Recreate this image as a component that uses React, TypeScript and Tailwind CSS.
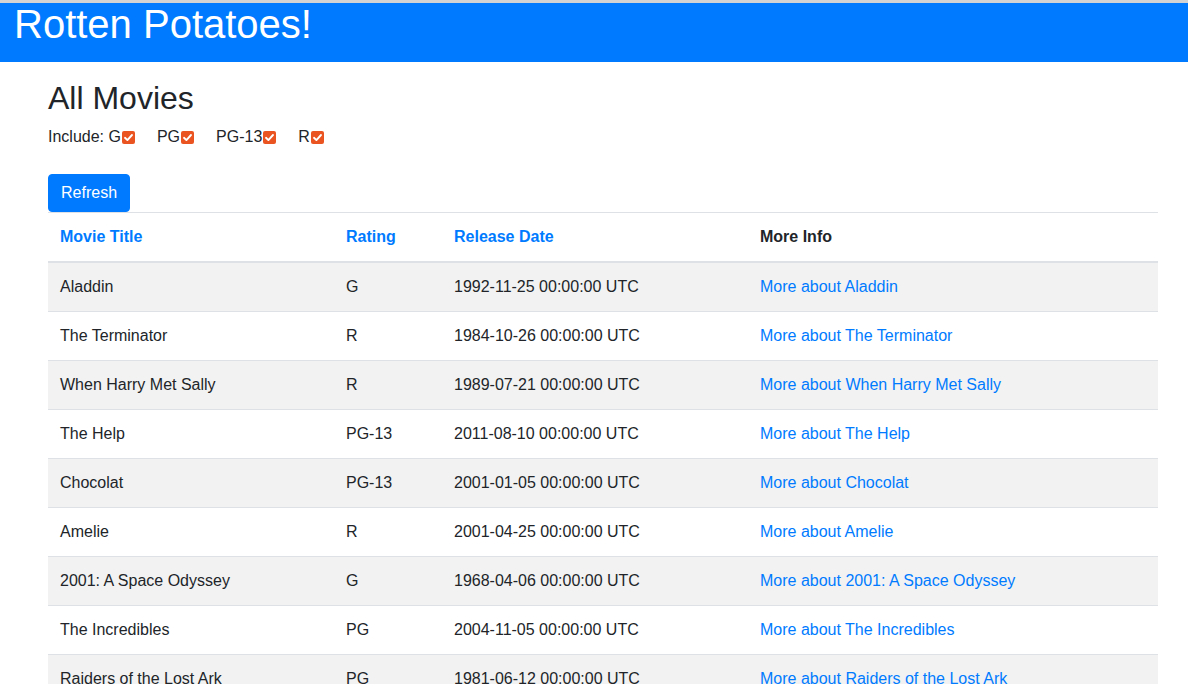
const movies = [
  { title: "Aladdin", rating: "G", date: "1992-11-25 00:00:00 UTC" },
  { title: "The Terminator", rating: "R", date: "1984-10-26 00:00:00 UTC" },
  { title: "When Harry Met Sally", rating: "R", date: "1989-07-21 00:00:00 UTC" },
  { title: "The Help", rating: "PG-13", date: "2011-08-10 00:00:00 UTC" },
  { title: "Chocolat", rating: "PG-13", date: "2001-01-05 00:00:00 UTC" },
  { title: "Amelie", rating: "R", date: "2001-04-25 00:00:00 UTC" },
  { title: "2001: A Space Odyssey", rating: "G", date: "1968-04-06 00:00:00 UTC" },
  { title: "The Incredibles", rating: "PG", date: "2004-11-05 00:00:00 UTC" },
  { title: "Raiders of the Lost Ark", rating: "PG", date: "1981-06-12 00:00:00 UTC" },
];

const ratings = ["G", "PG", "PG-13", "R"];

const CheckBox = () => (
  <span className="ml-[1px] inline-flex h-[13px] w-[13px] items-center justify-center rounded-[2px] bg-[#e95420]">
    <svg width="11" height="11" viewBox="0 0 11 11" fill="none">
      <path d="M2 5.8 L4.4 8.1 L9 3" stroke="white" strokeWidth="1.9" strokeLinecap="round" strokeLinejoin="round" />
    </svg>
  </span>
);

export default function App() {
  return (
    <div className="min-h-screen bg-white font-['Liberation_Sans',Arial,sans-serif] text-base text-[#212529]">
      <div className="h-[3px] bg-[#d3d3d3]" />
      {/* Header */}
      <div className="h-[59px] bg-[#007bff] pl-[14px]">
        <h1 className="text-[40px] leading-[42px] font-normal text-white">Rotten Potatoes!</h1>
      </div>

      <div className="ml-[48px] w-[1110px]">
        <h2 className="mt-[17px] mb-2 text-[32px] leading-[38.4px] font-normal">All Movies</h2>

        {/* Filters */}
        <div className="mt-[4px] flex items-center gap-[22px] leading-6">
          {ratings.map((r, i) => (
            <label key={r} className="flex items-center">
              {i === 0 ? "Include: " : ""}
              {r}
              <CheckBox />
            </label>
          ))}
        </div>

        <button className="mt-[25px] h-[38px] rounded-[4px] border border-[#007bff] bg-[#007bff] px-3 leading-6 text-white">
          Refresh
        </button>

        {/* Table */}
        <table className="w-full table-fixed border-collapse">
          <thead>
            <tr>
              <th className="w-[286px] border-t border-b-2 border-[#dee2e6] p-3 text-left font-bold leading-6 text-[#007bff]">Movie Title</th>
              <th className="w-[108px] border-t border-b-2 border-[#dee2e6] p-3 text-left font-bold leading-6 text-[#007bff]">Rating</th>
              <th className="w-[306px] border-t border-b-2 border-[#dee2e6] p-3 text-left font-bold leading-6 text-[#007bff]">Release Date</th>
              <th className="border-t border-b-2 border-[#dee2e6] p-3 text-left font-bold leading-6">More Info</th>
            </tr>
          </thead>
          <tbody>
            {movies.map((m, i) => (
              <tr key={m.title} className={i % 2 === 0 ? "bg-[#f2f2f2]" : "bg-white"}>
                <td className="border-t border-[#dee2e6] p-3 leading-6">{m.title}</td>
                <td className="border-t border-[#dee2e6] p-3 leading-6">{m.rating}</td>
                <td className="border-t border-[#dee2e6] p-3 leading-6">{m.date}</td>
                <td className="border-t border-[#dee2e6] p-3 leading-6">
                  <a href="#" className="text-[#007bff]">More about {m.title}</a>
                </td>
              </tr>
            ))}
          </tbody>
        </table>
      </div>
    </div>
  );
}
